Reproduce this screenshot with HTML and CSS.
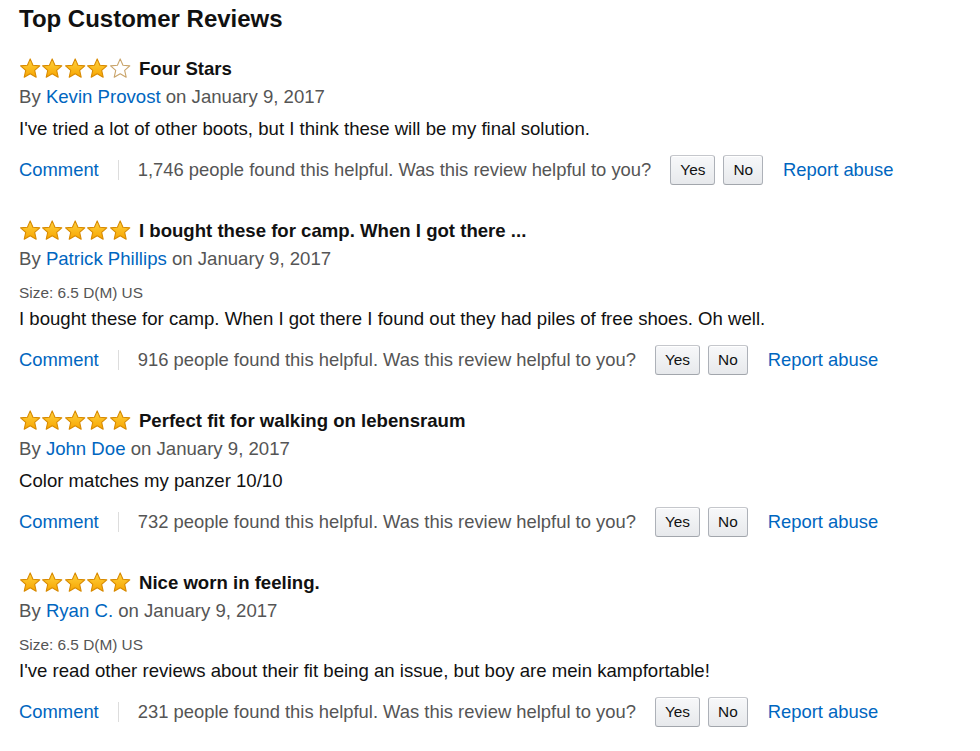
FILE: index.html
```html
<!DOCTYPE html>
<html>
<head>
<meta charset="utf-8">
<link rel="stylesheet" href="styles.css">
</head>
<body>
<svg width="0" height="0" class="defs">
  <defs>
    <linearGradient id="gold" x1="0" y1="0" x2="0" y2="1">
      <stop offset="0" stop-color="#ffd23f"/>
      <stop offset="1" stop-color="#f7a500"/>
    </linearGradient>
    <symbol id="star" viewBox="0 0 22 21">
      <path d="M11 0.9 L13.76 7.2 L20.6 7.86 L15.47 12.45 L16.97 19.2 L11 15.7 L5.03 19.2 L6.53 12.45 L1.4 7.86 L8.24 7.2 Z" fill="url(#gold)" stroke="#d88a00" stroke-width="1.1" stroke-linejoin="round"/>
    </symbol>
    <symbol id="star-empty" viewBox="0 0 22 21">
      <path d="M11 0.9 L13.76 7.2 L20.6 7.86 L15.47 12.45 L16.97 19.2 L11 15.7 L5.03 19.2 L6.53 12.45 L1.4 7.86 L8.24 7.2 Z" fill="#fff" stroke="#c9a46a" stroke-width="1.1" stroke-linejoin="round"/>
    </symbol>
  </defs>
</svg>

<h2 class="page-title">Top Customer Reviews</h2>

<div class="review">
  <div class="review-head">
    <span class="stars">
      <svg class="star"><use href="#star"/></svg><svg class="star"><use href="#star"/></svg><svg class="star"><use href="#star"/></svg><svg class="star"><use href="#star"/></svg><svg class="star"><use href="#star-empty"/></svg>
    </span>
    <span class="review-title">Four Stars</span>
  </div>
  <div class="byline">By <a class="link">Kevin Provost</a> on January 9, 2017</div>
  <div class="body">I've tried a lot of other boots, but I think these will be my final solution.</div>
  <div class="actions">
    <a class="link">Comment</a>
    <span class="sep"></span>
    <span class="helpful">1,746 people found this helpful. Was this review helpful to you?</span>
    <span class="buttons"><button class="btn">Yes</button><button class="btn">No</button></span>
    <a class="link report">Report abuse</a>
  </div>
</div>

<div class="review">
  <div class="review-head">
    <span class="stars">
      <svg class="star"><use href="#star"/></svg><svg class="star"><use href="#star"/></svg><svg class="star"><use href="#star"/></svg><svg class="star"><use href="#star"/></svg><svg class="star"><use href="#star"/></svg>
    </span>
    <span class="review-title">I bought these for camp. When I got there ...</span>
  </div>
  <div class="byline">By <a class="link">Patrick Phillips</a> on January 9, 2017</div>
  <div class="size">Size: 6.5 D(M) US</div>
  <div class="body tight">I bought these for camp. When I got there I found out they had piles of free shoes. Oh well.</div>
  <div class="actions">
    <a class="link">Comment</a>
    <span class="sep"></span>
    <span class="helpful">916 people found this helpful. Was this review helpful to you?</span>
    <span class="buttons"><button class="btn">Yes</button><button class="btn">No</button></span>
    <a class="link report">Report abuse</a>
  </div>
</div>

<div class="review">
  <div class="review-head">
    <span class="stars">
      <svg class="star"><use href="#star"/></svg><svg class="star"><use href="#star"/></svg><svg class="star"><use href="#star"/></svg><svg class="star"><use href="#star"/></svg><svg class="star"><use href="#star"/></svg>
    </span>
    <span class="review-title">Perfect fit for walking on lebensraum</span>
  </div>
  <div class="byline">By <a class="link">John Doe</a> on January 9, 2017</div>
  <div class="body">Color matches my panzer 10/10</div>
  <div class="actions">
    <a class="link">Comment</a>
    <span class="sep"></span>
    <span class="helpful">732 people found this helpful. Was this review helpful to you?</span>
    <span class="buttons"><button class="btn">Yes</button><button class="btn">No</button></span>
    <a class="link report">Report abuse</a>
  </div>
</div>

<div class="review">
  <div class="review-head">
    <span class="stars">
      <svg class="star"><use href="#star"/></svg><svg class="star"><use href="#star"/></svg><svg class="star"><use href="#star"/></svg><svg class="star"><use href="#star"/></svg><svg class="star"><use href="#star"/></svg>
    </span>
    <span class="review-title">Nice worn in feeling.</span>
  </div>
  <div class="byline">By <a class="link">Ryan C.</a> on January 9, 2017</div>
  <div class="size">Size: 6.5 D(M) US</div>
  <div class="body tight">I've read other reviews about their fit being an issue, but boy are mein kampfortable!</div>
  <div class="actions">
    <a class="link">Comment</a>
    <span class="sep"></span>
    <span class="helpful">231 people found this helpful. Was this review helpful to you?</span>
    <span class="buttons"><button class="btn">Yes</button><button class="btn">No</button></span>
    <a class="link report">Report abuse</a>
  </div>
</div>
</body>
</html>
```

FILE: styles.css
```css
html, body {
  margin: 0;
  background: #fff;
}
body {
  padding: 5px 19px 0 19px;
  font-family: "Liberation Sans", Arial, sans-serif;
  font-size: 18.6px;
  color: #111;
}
.defs {
  position: absolute;
  width: 0;
  height: 0;
}
.page-title {
  margin: 0;
  font-size: 24px;
  line-height: 28px;
  font-weight: bold;
  color: #111;
}
.review {
  margin-top: 21px;
}
.review + .review {
  margin-top: 30px;
}
.review-head {
  display: flex;
  align-items: center;
  height: 29px;
}
.stars {
  display: flex;
  margin-right: 8px;
}
.star {
  width: 22.4px;
  height: 21px;
  display: block;
}
.review-title {
  font-weight: bold;
  font-size: 18.6px;
  color: #111;
}
.byline {
  line-height: 28px;
  color: #555;
}
.link {
  color: #0066c0;
  text-decoration: none;
}
.size {
  margin-top: 9px;
  font-size: 15.4px;
  line-height: 22px;
  color: #555;
}
.body {
  margin-top: 4px;
  line-height: 28px;
  color: #111;
}
.body.tight {
  margin-top: 1px;
}
.actions {
  display: flex;
  align-items: center;
  height: 32px;
  margin-top: 11px;
  font-size: 18.4px;
  color: #555;
}
.sep {
  width: 1px;
  height: 20px;
  background: #ddd;
  margin: 0 19px;
}
.buttons {
  display: flex;
  gap: 8px;
  margin-left: 19px;
}
.btn {
  font-family: "Liberation Sans", Arial, sans-serif;
  font-size: 15.4px;
  color: #111;
  height: 30px;
  padding: 0 9px;
  border: 1px solid #adb1b8;
  border-top-color: #c5c7cc;
  border-bottom-color: #a2a6ac;
  border-radius: 3px;
  background: linear-gradient(#f7f8fa, #e7e9ec);
  box-shadow: inset 0 1px 0 #fff;
}
.report {
  margin-left: 20px;
}
```
